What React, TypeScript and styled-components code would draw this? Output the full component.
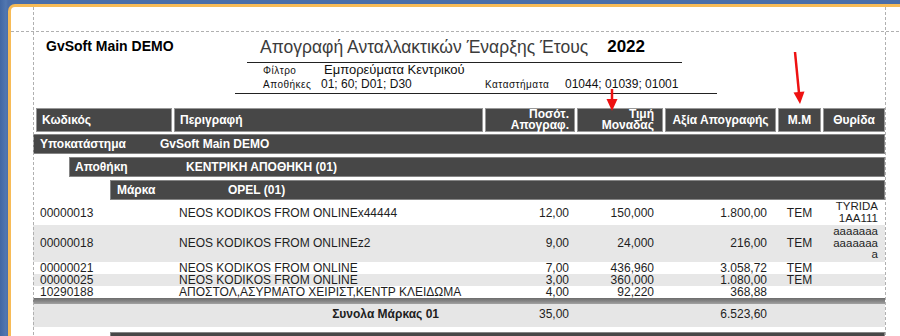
import React from 'react';
import styled, { createGlobalStyle } from 'styled-components';

const GlobalStyle = createGlobalStyle`
  html, body { margin: 0; padding: 0; }
  body {
    background: #4a6ea9;
    font-family: "Liberation Sans", Arial, sans-serif;
    overflow: hidden;
  }
`;

const COLS = '136px 309px 90px 86px 111px 43px 62px';

const Frame = styled.div`
  position: relative;
  width: 900px;
  height: 336px;
  box-sizing: border-box;
  padding: 4px 0 0 8px;
  background: linear-gradient(to right, #4167a3 0px, #5277b0 6px, #4a6ea9 8px);
  overflow: hidden;
`;

const Page = styled.div`
  height: 100%;
  box-sizing: border-box;
  background: #ffffff;
  border-top: 3px solid #f7bb57;
  border-left: 3px solid #f7bb57;
  border-top-left-radius: 7px;
`;

const Sheet = styled.div`
  margin-left: 22px;
  width: 852px;
`;

/* ---------- report header ---------- */

const ReportHeader = styled.div`
  display: flex;
  padding-top: 30px;
`;

const Company = styled.div`
  width: 202px;
  box-sizing: border-box;
  padding-left: 13px;
  margin-top: 1px;
  font-size: 14px;
  line-height: 16px;
  font-weight: bold;
  color: #000;
`;

const TitleBlock = styled.div`
  width: 482px;
`;

const TitleRow = styled.div`
  display: flex;
  margin-left: 12px;
  width: 435px;
  height: 26px;
  box-sizing: border-box;
  padding-left: 13px;
  border-bottom: 1px solid #222;
`;

const Title = styled.span`
  font-size: 17.5px;
  line-height: 20px;
  color: #3c3c3c;
`;

const Year = styled.span`
  margin-left: 19px;
  font-size: 17px;
  line-height: 20px;
  font-weight: bold;
  color: #000;
`;

const FilterGrid = styled.div`
  display: grid;
  grid-template-columns: 58px 164px 80px auto;
  grid-auto-rows: 14px;
  align-items: baseline;
  padding: 0 0 2px 28px;
  border-bottom: 1px solid #222;
  color: #111;
`;

const FilterLabel = styled.span`
  font-size: 10px;
  line-height: 14px;
  letter-spacing: 0.5px;
`;

const FilterValue = styled.span<{ $big?: boolean; $span?: number }>`
  font-size: ${(p) => (p.$big ? '13px' : '12px')};
  line-height: 14px;
  ${(p) => (p.$span ? `grid-column: span ${p.$span}; padding-left: 3px;` : '')}
`;

/* ---------- column header ---------- */

const HeaderRow = styled.div`
  display: grid;
  grid-template-columns: ${COLS};
  column-gap: 2px;
  margin: 14px 0 0 3px;
  height: 24px;
`;

type Align = 'left' | 'right' | 'center';

const HeadCell = styled.div<{ $align: Align; $pad: number }>`
  display: flex;
  align-items: center;
  justify-content: ${(p) => (p.$align === 'left' ? 'flex-start' : p.$align === 'right' ? 'flex-end' : 'center')};
  text-align: ${(p) => p.$align};
  box-sizing: border-box;
  padding: 0 ${(p) => (p.$align === 'right' ? p.$pad : 0)}px 0 ${(p) => (p.$align === 'left' ? p.$pad : 0)}px;
  background: #474747;
  border: 1px solid #989898;
  color: #fff;
  font-size: 12px;
  line-height: 11px;
  font-weight: bold;
`;

/* ---------- group bands ---------- */

const GroupRow = styled.div<{ $indent: number; $gap: number }>`
  display: flex;
  align-items: center;
  margin: ${(p) => p.$gap}px 0 0 ${(p) => p.$indent}px;
  height: 20px;
  box-sizing: border-box;
  background: #474747;
  border: 1px solid #858585;
  color: #fff;
  font-size: 12px;
  font-weight: bold;
`;

const GroupLabel = styled.span<{ $pad: number; $width: number }>`
  box-sizing: border-box;
  width: ${(p) => p.$width}px;
  padding-left: ${(p) => p.$pad}px;
`;

/* ---------- detail lines ---------- */

const DataRow = styled.div<{ $shaded: boolean }>`
  display: grid;
  grid-template-columns: ${COLS};
  column-gap: 2px;
  align-items: center;
  padding-left: 3px;
  min-height: 12px;
  background: ${(p) => (p.$shaded ? '#e7e7e7' : '#ffffff')};
  color: #1e1e1e;
  font-size: 12px;
  line-height: 12px;
  white-space: nowrap;
`;

const Cell = styled.div<{ $align?: Align; $pad?: number }>`
  text-align: ${(p) => p.$align ?? 'left'};
  padding-left: ${(p) => (p.$align === 'left' || !p.$align ? p.$pad ?? 0 : 0)}px;
  padding-right: ${(p) => (p.$align === 'right' ? p.$pad ?? 0 : 0)}px;
`;

const BinCell = styled.div`
  text-align: right;
  padding: 1px 7px 1px 0;
  font-size: 11.5px;
  line-height: 11.5px;
`;

const Separator = styled.div`
  height: 6px;
  background: linear-gradient(to bottom, #6c6c6c, #8a8a8a 60%, #a2a2a2);
`;

const TotalsRow = styled.div`
  display: grid;
  grid-template-columns: ${COLS};
  column-gap: 2px;
  align-items: start;
  padding: 4px 0 0 3px;
  height: 23px;
  box-sizing: border-box;
  background: #e6e6e6;
  color: #1e1e1e;
  font-size: 12px;
  line-height: 12px;
`;

const TotalsLabel = styled.div`
  grid-column: 1 / span 2;
  text-align: right;
  padding-right: 44px;
  font-weight: bold;
`;

/* ---------- overlays: margin guides and markers ---------- */

const GuideV = styled.div<{ $x: number }>`
  position: absolute;
  left: ${(p) => p.$x}px;
  top: 7px;
  bottom: 0;
  width: 1px;
  background: repeating-linear-gradient(to bottom, #b0b0b0 0 3px, transparent 3px 5px);
  pointer-events: none;
`;

const GuideH = styled.div<{ $y: number }>`
  position: absolute;
  top: ${(p) => p.$y}px;
  left: 11px;
  right: 0;
  height: 1px;
  background: repeating-linear-gradient(to right, #b0b0b0 0 3px, transparent 3px 5px);
  pointer-events: none;
`;

const Markers = styled.svg`
  position: absolute;
  left: 0;
  top: 0;
  pointer-events: none;
`;

type Line = {
  code: string;
  desc: string;
  qty: string;
  price: string;
  value: string;
  unit: string;
  bin: string[];
};

const lines: Line[] = [
  { code: '00000013', desc: 'NEOS KODIKOS FROM ONLINEx44444', qty: '12,00', price: '150,000', value: '1.800,00', unit: 'TEM', bin: ['TYRIDA', '1AA111'] },
  { code: '00000018', desc: 'NEOS KODIKOS FROM ONLINEz2', qty: '9,00', price: '24,000', value: '216,00', unit: 'TEM', bin: ['aaaaaaa', 'aaaaaaa', 'a'] },
  { code: '00000021', desc: 'NEOS KODIKOS FROM ONLINE', qty: '7,00', price: '436,960', value: '3.058,72', unit: 'TEM', bin: [] },
  { code: '00000025', desc: 'NEOS KODIKOS FROM ONLINE', qty: '3,00', price: '360,000', value: '1.080,00', unit: 'TEM', bin: [] },
  { code: '10290188', desc: 'ΑΠΟΣΤΟΛ,ΑΣΥΡΜΑΤΟ ΧΕΙΡΙΣΤ,ΚΕΝΤΡ ΚΛΕΙΔΩΜΑ', qty: '4,00', price: '92,220', value: '368,88', unit: '', bin: [] },
];

const headers: { label: string[]; align: Align; pad: number }[] = [
  { label: ['Κωδικός'], align: 'left', pad: 5 },
  { label: ['Περιγραφή'], align: 'left', pad: 5 },
  { label: ['Ποσότ.', 'Απογραφ.'], align: 'right', pad: 5 },
  { label: ['Τιμή', 'Μοναδας'], align: 'right', pad: 8 },
  { label: ['Αξία Απογραφής'], align: 'center', pad: 0 },
  { label: ['Μ.Μ'], align: 'center', pad: 0 },
  { label: ['Θυρίδα'], align: 'center', pad: 0 },
];

export default function App() {
  return (
    <>
      <GlobalStyle />
      <Frame>
        <Page>
          <Sheet>
            <ReportHeader>
              <Company>GvSoft Main DEMO</Company>
              <TitleBlock>
                <TitleRow>
                  <Title>Απογραφή Ανταλλακτικών Έναρξης Έτους</Title>
                  <Year>2022</Year>
                </TitleRow>
                <FilterGrid>
                  <FilterLabel>Φίλτρο</FilterLabel>
                  <FilterValue $big $span={3}>Εμπορεύματα Κεντρικού</FilterValue>
                  <FilterLabel>Αποθήκες</FilterLabel>
                  <FilterValue>01; 60; D01; D30</FilterValue>
                  <FilterLabel>Καταστήματα</FilterLabel>
                  <FilterValue>01044; 01039; 01001</FilterValue>
                </FilterGrid>
              </TitleBlock>
            </ReportHeader>

            <HeaderRow>
              {headers.map((h, i) => (
                <HeadCell key={i} $align={h.align} $pad={h.pad}>
                  <span>
                    {h.label.map((t, j) => (
                      <React.Fragment key={j}>
                        {j > 0 && <br />}
                        {t}
                      </React.Fragment>
                    ))}
                  </span>
                </HeadCell>
              ))}
            </HeaderRow>

            <GroupRow $indent={0} $gap={2}>
              <GroupLabel $pad={6} $width={126}>Υποκατάστημα</GroupLabel>
              <span>GvSoft Main DEMO</span>
            </GroupRow>
            <GroupRow $indent={36} $gap={3}>
              <GroupLabel $pad={5} $width={116}>Αποθήκη</GroupLabel>
              <span>ΚΕΝΤΡΙΚΗ ΑΠΟΘΗΚΗ (01)</span>
            </GroupRow>
            <GroupRow $indent={77} $gap={3}>
              <GroupLabel $pad={6} $width={117}>Μάρκα</GroupLabel>
              <span>OPEL (01)</span>
            </GroupRow>

            {lines.map((l, i) => (
              <DataRow key={l.code} $shaded={i % 2 === 1}>
                <Cell $pad={4}>{l.code}</Cell>
                <Cell $pad={5}>{l.desc}</Cell>
                <Cell $align="right" $pad={6}>{l.qty}</Cell>
                <Cell $align="right" $pad={9}>{l.price}</Cell>
                <Cell $align="right" $pad={9}>{l.value}</Cell>
                <Cell $align="center">{l.unit}</Cell>
                <BinCell>
                  {l.bin.map((b, j) => (
                    <div key={j}>{b}</div>
                  ))}
                </BinCell>
              </DataRow>
            ))}

            <Separator />
            <TotalsRow>
              <TotalsLabel>Συνολα Μάρκας 01</TotalsLabel>
              <Cell $align="right" $pad={6}>35,00</Cell>
              <Cell />
              <Cell $align="right" $pad={9}>6.523,60</Cell>
            </TotalsRow>
            <GroupRow $indent={77} $gap={5} />
          </Sheet>
        </Page>

        <GuideH $y={31} />
        <GuideV $x={33} />
        <GuideV $x={885} />

        <Markers width={900} height={336} viewBox="0 0 900 336">
          <line x1={612} y1={89} x2={612} y2={101} stroke="#ee1111" strokeWidth={2.5} />
          <polygon points="606.5,99 617.5,99 612,111" fill="#ee1111" />
          <line x1={795} y1={52} x2={799} y2={93} stroke="#ee1111" strokeWidth={2.5} />
          <polygon points="793.5,92.5 804.5,91.5 800,104" fill="#ee1111" />
        </Markers>
      </Frame>
    </>
  );
}
